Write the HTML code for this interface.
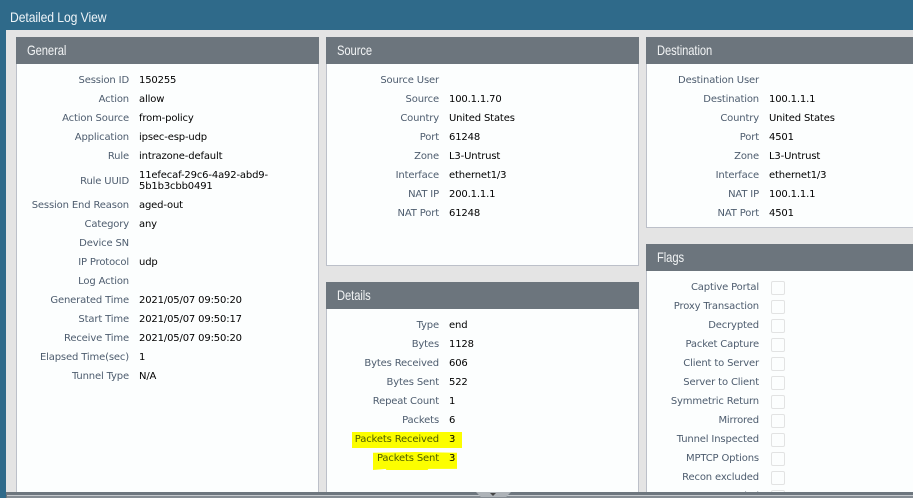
<!DOCTYPE html>
<html><head><meta charset="utf-8"><style>
html,body{margin:0;padding:0;width:913px;height:498px;overflow:hidden;background:#e4e4e4}
body{position:relative;font-family:"DejaVu Sans","Liberation Sans",sans-serif;font-size:10px;color:#000;letter-spacing:-.15px}
.top{position:absolute;left:0;top:0;width:913px;height:30px;background:#2f6a8a}
.left{position:absolute;left:0;top:0;width:6px;height:498px;background:#2f6a8a}
.title{position:absolute;left:10px;top:8px;font:14px/18px "Liberation Sans",sans-serif;color:#eef4f8;letter-spacing:-.1px;transform:scaleX(.87);transform-origin:0 0;white-space:nowrap}
.p{position:absolute;box-sizing:border-box;background:#fcfefe;border:1px solid #bcc0c9;border-top:0}
.h{position:absolute;left:-1px;right:-1px;top:0;height:27px;background:#6c757d;color:#f2f4f5;font:14px/27px "Liberation Sans",sans-serif;padding-left:11px;letter-spacing:-.1px}
.h span{display:inline-block;transform:scaleX(.8);transform-origin:0 0}
.rows{position:absolute;left:0;right:0}
.r{display:flex;height:19px;line-height:19px}
.l{width:112px;text-align:right;color:#4d5c6e;flex:none;white-space:nowrap}
.v{margin-left:10px;white-space:nowrap}
.u{height:30px;align-items:center}
.u .v{line-height:11px}
.c{position:absolute;box-sizing:border-box;width:14px;height:14px;left:771px;background:#fcfefe;border:1px solid #e2e3e3;border-radius:2px}
.bar{position:absolute;left:6px;right:0;top:492px;height:6px;background:#6d767e}
.bar i{position:absolute;left:1px;right:0;top:3px;height:1px;background:#c5c9cd}
.bar b{position:absolute;left:1px;right:0;top:4px;height:2px;background:#858c93}
.hd{position:absolute;left:476px;top:492px;width:35px;height:5px;background:#aeb3b8;clip-path:polygon(0 0,100% 0,86% 100%,14% 100%)}
.ar{position:absolute;left:490px;top:493px;width:0;height:0;border-left:3px solid transparent;border-right:3px solid transparent;border-top:3px solid #444}
.y{position:absolute;background:#ffff00;mix-blend-mode:multiply}
</style></head><body>
<div class="top"></div><div class="left"></div>
<div class="title">Detailed Log View</div>

<div class="p" style="left:16px;top:37px;width:303px;height:461px"><div class="h"><span>General</span></div>
<div class="rows" style="top:34px">
<div class="r"><div class="l">Session ID</div><div class="v">150255</div></div>
<div class="r"><div class="l">Action</div><div class="v">allow</div></div>
<div class="r"><div class="l">Action Source</div><div class="v">from-policy</div></div>
<div class="r"><div class="l">Application</div><div class="v">ipsec-esp-udp</div></div>
<div class="r"><div class="l">Rule</div><div class="v">intrazone-default</div></div>
<div class="r u"><div class="l">Rule UUID</div><div class="v">11efecaf-29c6-4a92-abd9-<br>5b1b3cbb0491</div></div>
<div class="r"><div class="l">Session End Reason</div><div class="v">aged-out</div></div>
<div class="r"><div class="l">Category</div><div class="v">any</div></div>
<div class="r"><div class="l">Device SN</div><div class="v"></div></div>
<div class="r"><div class="l">IP Protocol</div><div class="v">udp</div></div>
<div class="r"><div class="l">Log Action</div><div class="v"></div></div>
<div class="r"><div class="l">Generated Time</div><div class="v">2021/05/07 09:50:20</div></div>
<div class="r"><div class="l">Start Time</div><div class="v">2021/05/07 09:50:17</div></div>
<div class="r"><div class="l">Receive Time</div><div class="v">2021/05/07 09:50:20</div></div>
<div class="r"><div class="l">Elapsed Time(sec)</div><div class="v">1</div></div>
<div class="r"><div class="l">Tunnel Type</div><div class="v">N/A</div></div>
</div></div>

<div class="p" style="left:326px;top:37px;width:313px;height:229px"><div class="h"><span>Source</span></div>
<div class="rows" style="top:34px">
<div class="r"><div class="l">Source User</div><div class="v"></div></div>
<div class="r"><div class="l">Source</div><div class="v">100.1.1.70</div></div>
<div class="r"><div class="l">Country</div><div class="v">United States</div></div>
<div class="r"><div class="l">Port</div><div class="v">61248</div></div>
<div class="r"><div class="l">Zone</div><div class="v">L3-Untrust</div></div>
<div class="r"><div class="l">Interface</div><div class="v">ethernet1/3</div></div>
<div class="r"><div class="l">NAT IP</div><div class="v">200.1.1.1</div></div>
<div class="r"><div class="l">NAT Port</div><div class="v">61248</div></div>
</div></div>

<div class="p" style="left:326px;top:282px;width:313px;height:216px"><div class="h"><span>Details</span></div>
<div class="rows" style="top:34px">
<div class="r"><div class="l">Type</div><div class="v">end</div></div>
<div class="r"><div class="l">Bytes</div><div class="v">1128</div></div>
<div class="r"><div class="l">Bytes Received</div><div class="v">606</div></div>
<div class="r"><div class="l">Bytes Sent</div><div class="v">522</div></div>
<div class="r"><div class="l">Repeat Count</div><div class="v">1</div></div>
<div class="r"><div class="l">Packets</div><div class="v">6</div></div>
<div class="r"><div class="l">Packets Received</div><div class="v">3</div></div>
<div class="r"><div class="l">Packets Sent</div><div class="v">3</div></div>
</div></div>

<div class="p" style="left:646px;top:37px;width:280px;height:191px"><div class="h"><span>Destination</span></div>
<div class="rows" style="top:34px">
<div class="r"><div class="l">Destination User</div><div class="v"></div></div>
<div class="r"><div class="l">Destination</div><div class="v">100.1.1.1</div></div>
<div class="r"><div class="l">Country</div><div class="v">United States</div></div>
<div class="r"><div class="l">Port</div><div class="v">4501</div></div>
<div class="r"><div class="l">Zone</div><div class="v">L3-Untrust</div></div>
<div class="r"><div class="l">Interface</div><div class="v">ethernet1/3</div></div>
<div class="r"><div class="l">NAT IP</div><div class="v">100.1.1.1</div></div>
<div class="r"><div class="l">NAT Port</div><div class="v">4501</div></div>
</div></div>

<div class="p" style="left:646px;top:244px;width:280px;height:254px"><div class="h"><span>Flags</span></div>
<div class="rows" style="top:34px">
<div class="r"><div class="l">Captive Portal</div></div>
<div class="r"><div class="l">Proxy Transaction</div></div>
<div class="r"><div class="l">Decrypted</div></div>
<div class="r"><div class="l">Packet Capture</div></div>
<div class="r"><div class="l">Client to Server</div></div>
<div class="r"><div class="l">Server to Client</div></div>
<div class="r"><div class="l">Symmetric Return</div></div>
<div class="r"><div class="l">Mirrored</div></div>
<div class="r"><div class="l">Tunnel Inspected</div></div>
<div class="r"><div class="l">MPTCP Options</div></div>
<div class="r"><div class="l">Recon excluded</div></div>
<div class="r"><div class="l">Forwarded</div></div>
</div></div>

<div class="c" style="top:281px"></div><div class="c" style="top:300px"></div><div class="c" style="top:319px"></div><div class="c" style="top:338px"></div><div class="c" style="top:357px"></div><div class="c" style="top:376px"></div><div class="c" style="top:395px"></div><div class="c" style="top:414px"></div><div class="c" style="top:433px"></div><div class="c" style="top:452px"></div><div class="c" style="top:471px"></div><div class="c" style="top:490px"></div>

<div class="y" style="left:352px;top:432px;width:110px;height:16px"></div>
<div class="y" style="left:373px;top:452px;width:84px;height:18px;clip-path:polygon(0 4%,50% 0,100% 4%,100% 94%,66% 94%,65% 100%,16% 100%,15% 94%,0 100%)"></div>

<div class="bar"><i></i><b></b></div>
<div class="hd"></div><div class="ar"></div>
</body></html>
